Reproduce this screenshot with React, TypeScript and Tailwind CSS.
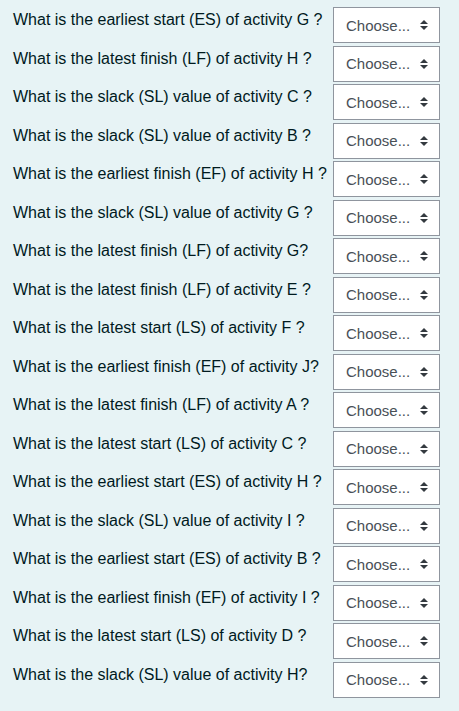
import React from 'react';

const questions = [
  'What is the earliest start (ES) of activity G ?',
  'What is the latest finish (LF) of activity H ?',
  'What is the slack (SL) value of activity C ?',
  'What is the slack (SL) value of activity B ?',
  'What is the earliest finish (EF) of activity H ?',
  'What is the slack (SL) value of activity G ?',
  'What is the latest finish (LF) of activity G?',
  'What is the latest finish (LF) of activity E ?',
  'What is the latest start (LS) of activity F ?',
  'What is the earliest finish (EF) of activity J?',
  'What is the latest finish (LF) of activity A ?',
  'What is the latest start (LS) of activity C ?',
  'What is the earliest start (ES) of activity H ?',
  'What is the slack (SL) value of activity I ?',
  'What is the earliest start (ES) of activity B ?',
  'What is the earliest finish (EF) of activity I ?',
  'What is the latest start (LS) of activity D ?',
  'What is the slack (SL) value of activity H?',
];

// up/down caret like Moodle's custom-select background
function Caret() {
  return (
    <svg width="8" height="10" viewBox="0 0 4 5" fill="#343a40" aria-hidden="true">
      <path d="M2 0L0 2h4zm0 5L0 3h4z" />
    </svg>
  );
}

function FakeSelect() {
  return (
    <div className="flex h-[36px] w-[107px] shrink-0 items-center justify-between border border-[#8f959e] bg-white pl-[12px] pr-[11px] text-[15px] text-[#495057]">
      <span className="leading-none">Choose...</span>
      <Caret />
    </div>
  );
}

export default function App() {
  return (
    <div className="min-h-[711px] w-[459px] bg-[#e7f3f5] pt-[7px] font-['Liberation_Sans',Arial,sans-serif] text-[#001a1e]">
      {questions.map((q) => (
        <div key={q} className="flex h-[38.5px] items-start">
          <div className="w-[333px] pl-[13px] pt-[2px] text-[16px] leading-[22px]">{q}</div>
          <FakeSelect />
        </div>
      ))}
    </div>
  );
}
